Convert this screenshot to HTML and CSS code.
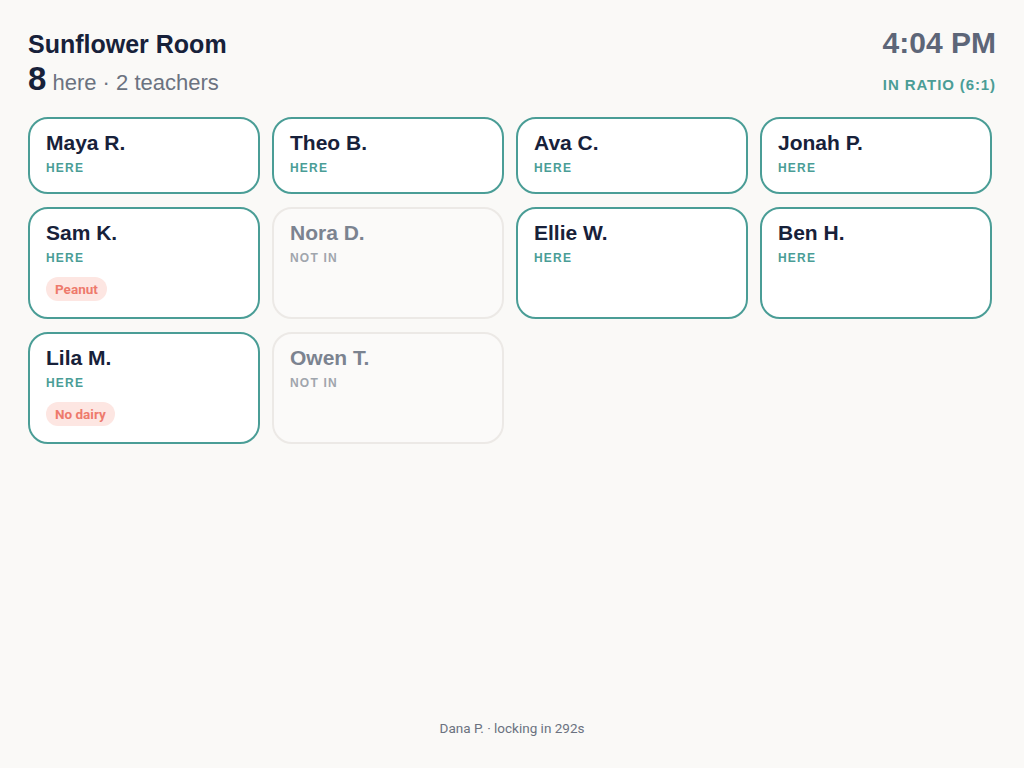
FILE: index.html
```html
<!DOCTYPE html>
<html>
<head>
<meta charset="utf-8">
<link rel="stylesheet" href="styles.css">
</head>
<body>
<div class="page">
  <header class="top">
    <div class="room">
      <h1 class="title">Sunflower Room</h1>
      <div class="count"><span class="num">8</span> here · 2 teachers</div>
    </div>
    <div class="status">
      <div class="time">4:04 PM</div>
      <div class="ratio">IN RATIO (6:1)</div>
    </div>
  </header>
  <main class="grid">
    <div class="card in"><div class="name">Maya R.</div><div class="state">HERE</div></div>
    <div class="card in"><div class="name">Theo B.</div><div class="state">HERE</div></div>
    <div class="card in"><div class="name">Ava C.</div><div class="state">HERE</div></div>
    <div class="card in"><div class="name">Jonah P.</div><div class="state">HERE</div></div>
    <div class="card in"><div class="name">Sam K.</div><div class="state">HERE</div><span class="tag">Peanut</span></div>
    <div class="card out"><div class="name">Nora D.</div><div class="state">NOT IN</div></div>
    <div class="card in"><div class="name">Ellie W.</div><div class="state">HERE</div></div>
    <div class="card in"><div class="name">Ben H.</div><div class="state">HERE</div></div>
    <div class="card in"><div class="name">Lila M.</div><div class="state">HERE</div><span class="tag">No dairy</span></div>
    <div class="card out"><div class="name">Owen T.</div><div class="state">NOT IN</div></div>
  </main>
  <footer class="foot">Dana P. · locking in 292s</footer>
</div>
</body>
</html>
```
FILE: styles.css
```css
html, body {
  margin: 0;
  padding: 0;
  background: #faf9f7;
  font-family: "Liberation Sans", Arial, sans-serif;
}
.page {
  height: 768px;
  box-sizing: border-box;
  padding: 28px 28px 0 28px;
  display: flex;
  flex-direction: column;
}
.top {
  display: flex;
  justify-content: space-between;
  align-items: flex-start;
}
.title {
  margin: 0;
  font-size: 25px;
  font-weight: 700;
  color: #17213a;
  line-height: 32px;
}
.count {
  margin-top: 1px;
  font-size: 22px;
  color: #6b7280;
  line-height: 36px;
}
.num {
  font-size: 33px;
  font-weight: 700;
  color: #17213a;
}
.status {
  text-align: right;
}
.time {
  font-size: 30px;
  font-weight: 700;
  color: #5d6678;
  line-height: 30px;
}
.ratio {
  margin-top: 18px;
  font-size: 15px;
  line-height: 17px;
  font-weight: 700;
  color: #4a9d96;
  letter-spacing: 0.9px;
}
.grid {
  margin-top: 16px;
  display: grid;
  grid-template-columns: repeat(4, 232px);
  column-gap: 12px;
  row-gap: 13px;
  align-content: start;
}
.card {
  box-sizing: border-box;
  border-radius: 20px;
  padding: 12px 16px 16px 16px;
  min-height: 77px;
}
.card.in {
  border: 2px solid #4a9d96;
  background: #ffffff;
}
.card.out {
  border: 2px solid #ece9e6;
  background: #fbfaf9;
}
.name {
  font-size: 21px;
  font-weight: 700;
  color: #17213a;
  line-height: 24px;
}
.state {
  margin-top: 6px;
  font-size: 12px;
  line-height: 14px;
  font-weight: 700;
  letter-spacing: 1.2px;
  color: #4a9d96;
}
.card.out .name { color: #7b8390; }
.card.out .state { color: #a0a5ad; }
.tag {
  display: inline-block;
  margin-top: 12px;
  background: #fde6e2;
  color: #ee7a6c;
  font-family: Roboto, "Liberation Sans", sans-serif;
  font-weight: 700;
  font-size: 13.5px;
  line-height: 24px;
  padding: 0 9px;
  border-radius: 12px;
}
.foot {
  margin-top: auto;
  margin-bottom: 32px;
  text-align: center;
  font-family: Roboto, "Liberation Sans", sans-serif;
  font-size: 13.5px;
  color: #6b7280;
}
```
